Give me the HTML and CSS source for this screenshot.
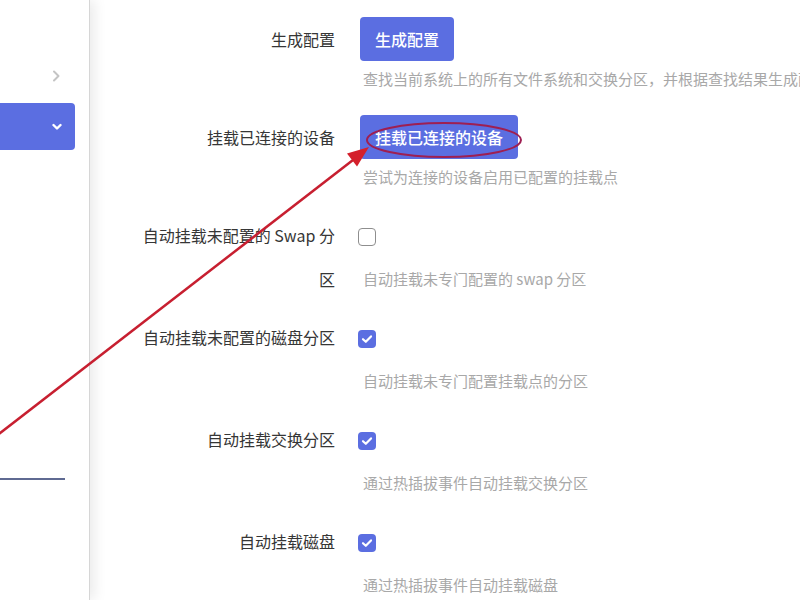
FILE: index.html
```html
<!DOCTYPE html>
<html lang="zh-CN">
<head>
<meta charset="utf-8">
<title>挂载点</title>
<link rel="stylesheet" href="styles.css">
</head>
<body>
<div class="page">
  <aside class="sidebar">
    <div class="nav-item">
      <svg class="chev-right" width="8" height="12" viewBox="0 0 8 12"><path d="M2 1.5 L6.5 6 L2 10.5" fill="none" stroke="#c4c4c4" stroke-width="2" stroke-linecap="round" stroke-linejoin="round"/></svg>
    </div>
    <div class="nav-item active">
      <svg class="chev-down" width="10" height="8" viewBox="0 0 10 8"><path d="M1.5 2 L5 5.5 L8.5 2" fill="none" stroke="#ffffff" stroke-width="2.4" stroke-linecap="round" stroke-linejoin="round"/></svg>
    </div>
    <div class="nav-divider"></div>
  </aside>

  <main class="content">
    <div class="row">
      <div class="label">生成配置</div>
      <div class="field">
        <button class="btn">生成配置</button>
        <div class="desc">查找当前系统上的所有文件系统和交换分区，并根据查找结果生成配置文件</div>
      </div>
    </div>

    <div class="row">
      <div class="label">挂载已连接的设备</div>
      <div class="field">
        <button class="btn">挂载已连接的设备</button>
        <div class="desc">尝试为连接的设备启用已配置的挂载点</div>
      </div>
    </div>

    <div class="row">
      <div class="label">自动挂载未配置的 Swap 分区</div>
      <div class="field">
        <div class="check-line"><span class="checkbox"></span></div>
        <div class="desc desc-check">自动挂载未专门配置的 swap 分区</div>
      </div>
    </div>

    <div class="row">
      <div class="label">自动挂载未配置的磁盘分区</div>
      <div class="field">
        <div class="check-line"><span class="checkbox checked"><svg width="12" height="10" viewBox="0 0 12 10"><path d="M2 5.2 L4.8 7.8 L10 2.4" fill="none" stroke="#fff" stroke-width="2.2" stroke-linecap="round" stroke-linejoin="round"/></svg></span></div>
        <div class="desc desc-check">自动挂载未专门配置挂载点的分区</div>
      </div>
    </div>

    <div class="row">
      <div class="label">自动挂载交换分区</div>
      <div class="field">
        <div class="check-line"><span class="checkbox checked"><svg width="12" height="10" viewBox="0 0 12 10"><path d="M2 5.2 L4.8 7.8 L10 2.4" fill="none" stroke="#fff" stroke-width="2.2" stroke-linecap="round" stroke-linejoin="round"/></svg></span></div>
        <div class="desc desc-check">通过热插拔事件自动挂载交换分区</div>
      </div>
    </div>

    <div class="row">
      <div class="label">自动挂载磁盘</div>
      <div class="field">
        <div class="check-line"><span class="checkbox checked"><svg width="12" height="10" viewBox="0 0 12 10"><path d="M2 5.2 L4.8 7.8 L10 2.4" fill="none" stroke="#fff" stroke-width="2.2" stroke-linecap="round" stroke-linejoin="round"/></svg></span></div>
        <div class="desc desc-check">通过热插拔事件自动挂载磁盘</div>
      </div>
    </div>
  </main>

  <svg class="annotation" width="800" height="600" viewBox="0 0 800 600">
    <line x1="-5" y1="437" x2="353" y2="160" stroke="#c71f30" stroke-width="2.5"/>
    <polygon points="369,147 357,166.5 347,153.5" fill="#d4202c"/>
    <ellipse cx="444" cy="140" rx="77" ry="17" fill="none" stroke="#9e1f52" stroke-width="2"/>
  </svg>
</div>
</body>
</html>
```

FILE: styles.css
```css
html, body {
  margin: 0;
  padding: 0;
  background: #ffffff;
  overflow: hidden;
}

body {
  font-family: "Noto Sans CJK SC", "Noto Sans", sans-serif;
  color: #363636;
}

.page {
  position: relative;
  display: flex;
  width: 800px;
  height: 600px;
  overflow: hidden;
}

/* ---------- sidebar ---------- */
.sidebar {
  position: relative;
  z-index: 1;
  flex: none;
  width: 90px;
  box-sizing: border-box;
  padding-top: 53px;
  display: flex;
  flex-direction: column;
  background: #ffffff;
  border-right: 1px solid #d6d6d6;
  box-shadow: 5px 0 12px rgba(0, 0, 0, 0.08);
}

.nav-item {
  width: 75px;
  height: 46px;
  box-sizing: border-box;
  display: flex;
  align-items: center;
  justify-content: flex-end;
  padding-right: 15px;
  margin-bottom: 4px;
}

.nav-item.active {
  height: 47px;
  padding-right: 13px;
  background: #5b6ee1;
  border-radius: 0 4px 4px 0;
}

.nav-divider {
  width: 65px;
  height: 2px;
  margin-top: 324px;
  background: #5f6a92;
}

/* ---------- content ---------- */
.content {
  flex: 1;
  min-width: 0;
  padding: 17px 0 0 50px;
}

.row {
  display: flex;
  align-items: flex-start;
  gap: 25px;
  margin-bottom: 24px;
}

.label {
  flex: none;
  width: 195px;
  height: 44px;
  font-size: 16px;
  line-height: 44px;
  text-align: right;
  color: #363636;
}

.field {
  display: flex;
  flex-direction: column;
  align-items: flex-start;
  min-width: 0;
}

.btn {
  height: 44px;
  padding: 0 15px;
  border: none;
  border-radius: 4px;
  background: #5b6ee1;
  color: #ffffff;
  font-family: "Noto Sans CJK SC", "Noto Sans", sans-serif;
  font-size: 16px;
  font-weight: 500;
  cursor: pointer;
}

.desc {
  margin-top: 6px;
  padding-left: 3px;
  font-size: 15px;
  line-height: 24px;
  color: #a8a8a8;
  white-space: nowrap;
}

.desc-check {
  margin-top: 10px;
}

.check-line {
  height: 44px;
  display: flex;
  align-items: center;
  margin-left: -2px;
}

.checkbox {
  width: 18px;
  height: 18px;
  box-sizing: border-box;
  border: 1.5px solid #8e8e8e;
  border-radius: 4px;
  background: #ffffff;
  display: flex;
  align-items: center;
  justify-content: center;
  margin-top: 3px;
}

.checkbox.checked {
  border: none;
  background: #5b6ee1;
}

/* ---------- annotation overlay ---------- */
.annotation {
  position: absolute;
  left: 0;
  top: 0;
  z-index: 2;
  pointer-events: none;
}
```
